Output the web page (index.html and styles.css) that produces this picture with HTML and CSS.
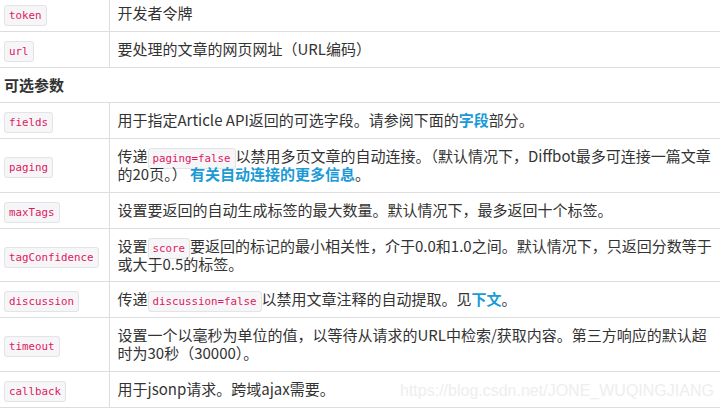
FILE: index.html
```html
<!DOCTYPE html>
<html lang="zh-CN">
<head>
  <meta charset="UTF-8" />
  <title>Article API 参数</title>
  <link rel="stylesheet" href="styles.css">
</head>
<body>
  <table class="params">
    <tr>
      <td class="name"><code>token</code></td>
      <td class="desc">开发者令牌</td>
    </tr>
    <tr>
      <td class="name"><code>url</code></td>
      <td class="desc">要处理的文章的网页网址（URL编码）</td>
    </tr>
    <tr>
      <th colspan="2">可选参数</th>
    </tr>
    <tr>
      <td class="name"><code>fields</code></td>
      <td class="desc">用于指定Article API返回的可选字段。请参阅下面的<a href="#">字段</a>部分。</td>
    </tr>
    <tr>
      <td class="name"><code>paging</code></td>
      <td class="desc">传递<code>paging=false</code>以禁用多页文章的自动连接。（默认情况下，Diffbot最多可连接一篇文章的20页。） <a href="#">有关自动连接的更多信息</a>。</td>
    </tr>
    <tr>
      <td class="name"><code>maxTags</code></td>
      <td class="desc">设置要返回的自动生成标签的最大数量。默认情况下，最多返回十个标签。</td>
    </tr>
    <tr>
      <td class="name"><code>tagConfidence</code></td>
      <td class="desc">设置<code>score</code>要返回的标记的最小相关性，介于0.0和1.0之间。默认情况下，只返回分数等于或大于0.5的标签。</td>
    </tr>
    <tr>
      <td class="name"><code>discussion</code></td>
      <td class="desc">传递<code>discussion=false</code>以禁用文章注释的自动提取。见<a href="#">下文</a>。</td>
    </tr>
    <tr>
      <td class="name"><code>timeout</code></td>
      <td class="desc">设置一个以毫秒为单位的值，以等待从请求的URL中检索/获取内容。第三方响应的默认超时为30秒（30000）。</td>
    </tr>
    <tr>
      <td class="name"><code>callback</code></td>
      <td class="desc">用于jsonp请求。跨域ajax需要。</td>
    </tr>
  </table>
  <div class="watermark">https://blog.csdn.net/JONE_WUQINGJIANG</div>
</body>
</html>
```

FILE: styles.css
```css
* {
  margin: 0;
  padding: 0;
  box-sizing: border-box;
}
html, body {
  width: 100%;
  height: 100%;
  background: #fff;
  color: #333;
  font-family: "Noto Sans CJK SC", "Noto Sans", sans-serif;
  font-size: 15px;
  overflow: hidden;
}
.params {
  width: 720px;
  margin-top: -5px;
  border-collapse: collapse;
}
.params td,
.params th {
  height: 36px;
  border-bottom: 1px solid #ddd;
  padding: 8px 4px 8.5px 8px;
  line-height: 18px;
  text-align: left;
  vertical-align: middle;
}
.params th {
  height: 35px;
  font-weight: 700;
  padding-left: 4px;
}
.params td.name {
  width: 109px;
  padding-left: 4px;
  border-right: 1px solid #ddd;
}
.params td.desc {
  padding-left: 8px;
}
code {
  font-family: "DejaVu Sans Mono", "Liberation Mono", monospace;
  font-size: 10.8px;
  line-height: 1;
  color: #e0185c;
  background: #f6f6f8;
  border: 1px solid #e3e3e8;
  border-radius: 3px;
  padding: 3px 4px;
}
.params a {
  color: #1b9ad6;
  font-weight: 700;
  text-decoration: none;
}
.watermark {
  position: absolute;
  left: 400px;
  top: 382px;
  font-family: "Liberation Sans", Arial, sans-serif;
  font-size: 16px;
  color: #eeeeee;
  pointer-events: none;
}
```
